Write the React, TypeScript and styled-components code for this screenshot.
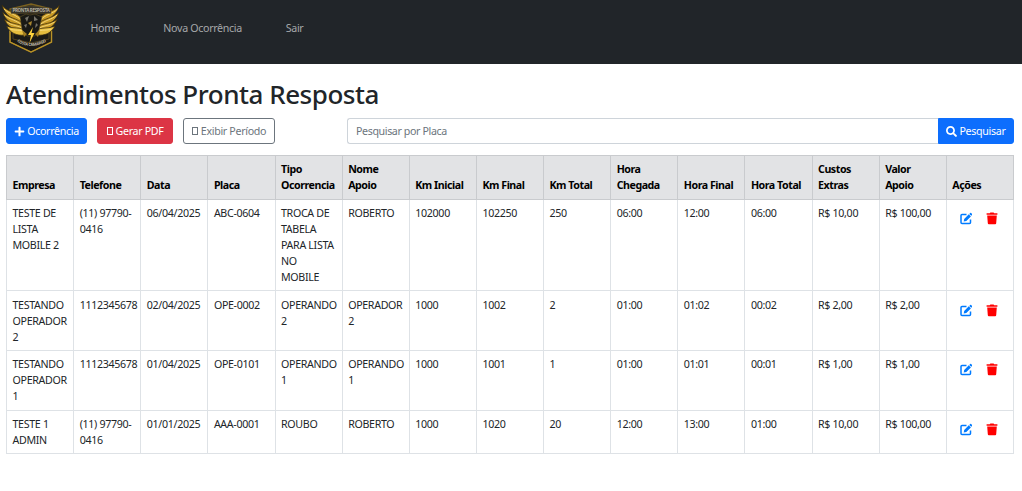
import React from 'react';
import styled, { createGlobalStyle, css } from 'styled-components';
import { FaPlus, FaSearch } from 'react-icons/fa';

const GlobalStyle = createGlobalStyle`
  *, *::before, *::after { box-sizing: border-box; }
  body {
    margin: 0;
    background: #fff;
    color: #212529;
    font-family: "Noto Sans", "Liberation Sans", sans-serif;
    font-size: 10.667px;
    line-height: 16px;
    letter-spacing: -0.03em;
  }
`;

const Navbar = styled.header`
  display: flex;
  align-items: flex-start;
  height: 64px;
  background: #212529;
`;

const Brand = styled.a`
  display: block;
  width: 62px;
  height: 56px;
`;

const NavList = styled.nav`
  display: flex;
  gap: 43.800px;
  padding: 20px 0 0 28.500px;
`;

const NavLink = styled.a`
  color: #a6a8a9;
`;

const Page = styled.main`
  padding: 14px 8px 0 6px;
`;

const Title = styled.h1`
  margin: 0 0 8px;
  font-size: 26px;
  line-height: 32px;
  font-weight: 500;
  letter-spacing: -0.018em;
`;

const Toolbar = styled.div`
  display: flex;
  align-items: stretch;
  gap: 10px;
  height: 26px;
  margin-bottom: 11px;
`;

type Variant = 'primary' | 'danger' | 'outline';

const variants = {
  primary: css`background: #0d6efd; border-color: #0d6efd; color: #fff;`,
  danger: css`background: #dc3545; border-color: #dc3545; color: #fff;`,
  outline: css`background: #fff; border-color: #6c757d; color: #6c757d;`,
};

const Button = styled.button<{ $variant: Variant; $width: number; $attached?: boolean }>`
  display: flex;
  align-items: center;
  justify-content: center;
  gap: 2px;
  width: ${(p) => p.$width}px;
  padding: 0;
  border: 1px solid;
  border-radius: ${(p) => (p.$attached ? '0 3px 3px 0' : '3px')};
  font: inherit;
  letter-spacing: inherit;
  white-space: nowrap;
  ${(p) => variants[p.$variant]}
`;

const MissingGlyph = styled.span`
  width: 6px;
  height: 8px;
  margin-right: 1px;
  border: 1px solid currentColor;
`;

const Search = styled.form`
  display: flex;
  width: 667px;
  margin-left: auto;
`;

const SearchInput = styled.input`
  flex: 1;
  min-width: 0;
  padding: 0 8px;
  border: 1px solid #ced4da;
  border-right: 0;
  border-radius: 3px 0 0 3px;
  font: inherit;
  letter-spacing: -0.036em;
  &::placeholder { color: #6c757d; opacity: 1; }
`;

const Table = styled.table`
  width: 1008px;
  table-layout: fixed;
  border-collapse: collapse;
`;

const HeadCell = styled.th`
  height: 44px;
  padding: 5px 5px 6px 5.500px;
  border: 1px solid #c9cbce;
  background: #e2e3e5;
  color: #000;
  text-align: left;
  vertical-align: bottom;
  font-weight: 700;
  letter-spacing: -0.043em;
`;

const HeadLabel = styled.div`
  width: 54.500px;
`;

const Row = styled.tr<{ $height: number }>`
  height: ${(p) => p.$height}px;
`;

const Cell = styled.td<{ $top?: number }>`
  padding: ${(p) => p.$top ?? 5}px 0 3px 5.500px;
  border: 1px solid #dee2e6;
  vertical-align: top;
`;

const Wrap = styled.div`
  width: 55.500px;
`;

const Actions = styled.div`
  display: flex;
  gap: 14px;
  padding: 7px 0 0 7.500px;
`;

const Icon = styled.svg<{ $color: string }>`
  width: 12px;
  height: 13px;
  color: ${(p) => p.$color};
`;

const EditIcon = () => (
  <Icon viewBox="0 0 12 13" $color="#007bff">
    <path d="M6.500 2.500H2Q1 2.500 1 3.500V10.500Q1 11.500 2 11.500H9.500Q10.500 11.500 10.500 10.500V7.500" fill="none" stroke="currentColor" strokeWidth="1.500" />
    <path d="M3.700 9.400L4.200 6.900L8.800 2.300L10.900 4.400L6.300 9Z M9.300 1.900L10.200 1Q10.700 .5 11.200 1L12 1.900Q12.400 2.400 12 2.900L11.300 3.800Z" fill="currentColor" />
  </Icon>
);

const DeleteIcon = () => (
  <Icon viewBox="0 0 12 13" $color="#ff0000">
    <path d="M.6 1.300H3.800L4.400 .5H7.600L8.200 1.300H11.400V2.800H.6Z M1.200 3.500H10.800L10.200 11.200Q10.100 12.200 9.200 12.200H2.800Q1.900 12.200 1.800 11.200Z" fill="currentColor" />
  </Icon>
);

const columns = [
  'Empresa', 'Telefone', 'Data', 'Placa', 'Tipo Ocorrencia', 'Nome Apoio', 'Km Inicial', 'Km Final',
  'Km Total', 'Hora Chegada', 'Hora Final', 'Hora Total', 'Custos Extras', 'Valor Apoio', 'Ações',
];

const records = [
  { height: 91, top: 5, cells: ['TESTE DE LISTA MOBILE 2', '(11) 97790-0416', '06/04/2025', 'ABC-0604', 'TROCA DE TABELA PARA LISTA NO MOBILE', 'ROBERTO', '102000', '102250', '250', '06:00', '12:00', '06:00', 'R$ 10,00', 'R$ 100,00'] },
  { height: 60, top: 6, cells: ['TESTANDO OPERADOR 2', '1112345678', '02/04/2025', 'OPE-0002', 'OPERANDO 2', 'OPERADOR 2', '1000', '1002', '2', '01:00', '01:02', '00:02', 'R$ 2,00', 'R$ 2,00'] },
  { height: 60, top: 5, cells: ['TESTANDO OPERADOR 1', '1112345678', '01/04/2025', 'OPE-0101', 'OPERANDO 1', 'OPERANDO 1', '1000', '1001', '1', '01:00', '01:01', '00:01', 'R$ 1,00', 'R$ 1,00'] },
  { height: 43, top: 5, cells: ['TESTE 1 ADMIN', '(11) 97790-0416', '01/01/2025', 'AAA-0001', 'ROUBO', 'ROBERTO', '1000', '1020', '20', '12:00', '13:00', '01:00', 'R$ 10,00', 'R$ 100,00'] },
];

const Wing = () => (
  <g fill="#c99a24" stroke="#33280d" strokeWidth=".7">
    <path d="M2 5 C6 12 17 11 23 20 L24 26 C15 21 4 15 2 5Z" />
    <path d="M2.500 12 C8 18 17 18 24 24 L25 29 C14 26 5 21 2.500 12Z" />
    <path d="M4 19 C10 24 18 23 25 27 L26 32 C16 31 8 28 4 19Z" />
    <path d="M6.500 26 C13 29 20 27 26 30 L24 35 C17 36 10 33 6.500 26Z" fill="#e6bd3e" />
    <path d="M4 9 C9 14 16 14 22 21 M4.500 15 C10 20 17 20 23 26 M7 22 C12 26 18 25 24 29 M10 29 C15 31 20 29 25 32" fill="none" stroke="#fae28c" strokeWidth=".8" />
  </g>
);

const Logo = () => (
  <svg width="62" height="56" viewBox="0 0 62 56">
    <path d="M31 4 L51.500 9 V42 L31 52 L10 42 V9 Z" fill="#1b1a16" stroke="#7c6220" strokeWidth="1.3" />
    <path d="M10 31 V42 L31 52 L51.500 42 V31" fill="none" stroke="#b99328" strokeWidth="1.3" />
    <path d="M13 33 V39 L31 43 L49 39 V33" fill="none" stroke="#514321" strokeWidth="1" />
    <Wing />
    <g transform="translate(61.5 0) scale(-1 1)"><Wing /></g>
    <path d="M20 17 L26 14 L30 15 L35 14 L42 17 L39 30 L35 36 H27 L22 30Z" fill="#191915" stroke="#75612b" strokeWidth=".5" />
    <path d="M25 18 L29 16 L27 22Z M34 16 L38 20 L34 21Z M36 23L38 25L35 28Z M24 25L27 24L26 28Z" fill="#77746a" />
    <path d="M28 23 L32 21 L31 26Z" fill="#a88630" />
    <path d="M22 30 L27 34 L24 37Z M40 30 L35 34 L38 37Z" fill="#a37e20" />
    <path d="M33 27 L28 35 H31 L29.500 43 L34.500 33 H31.500Z" fill="#ffd33d" />
    <path d="M11 8.500 L31 5.500 L51 8.500 V13.500 L31 13 L11 13.500Z" fill="#34322b" stroke="#74602c" strokeWidth=".5" />
    <text x="31" y="11.800" textAnchor="middle" textLength="37" fontSize="4.500" fontWeight="700" fill="#b5b0a0">PRONTA RESPOSTA</text>
    <path id="motto" d="M16 41 Q31 51 47 41" fill="none" />
    <text fontSize="4" fontWeight="700" fill="#c2bda9"><textPath href="#motto" textLength="31" startOffset="1">COSTA CAMARGO</textPath></text>
  </svg>
);

export default function App() {
  return (
    <>
      <GlobalStyle />
      <Navbar>
        <Brand><Logo /></Brand>
        <NavList>
          <NavLink>Home</NavLink>
          <NavLink>Nova Ocorrência</NavLink>
          <NavLink>Sair</NavLink>
        </NavList>
      </Navbar>
      <Page>
        <Title>Atendimentos Pronta Resposta</Title>
        <Toolbar>
          <Button $variant="primary" $width={81}><FaPlus size={11} />Ocorrência</Button>
          <Button $variant="danger" $width={76}><MissingGlyph />Gerar PDF</Button>
          <Button $variant="outline" $width={92}><MissingGlyph />Exibir Período</Button>
          <Search>
            <SearchInput placeholder="Pesquisar por Placa" />
            <Button type="button" $variant="primary" $width={76} $attached><FaSearch size={11} />Pesquisar</Button>
          </Search>
        </Toolbar>
        <Table>
          <thead>
            <tr>{columns.map((name) => <HeadCell key={name}><HeadLabel>{name}</HeadLabel></HeadCell>)}</tr>
          </thead>
          <tbody>
            {records.map((record, i) => (
              <Row key={i} $height={record.height}>
                {record.cells.map((text, j) => <Cell key={j} $top={record.top}><Wrap>{text}</Wrap></Cell>)}
                <Cell $top={record.top}><Actions><EditIcon /><DeleteIcon /></Actions></Cell>
              </Row>
            ))}
          </tbody>
        </Table>
      </Page>
    </>
  );
}
